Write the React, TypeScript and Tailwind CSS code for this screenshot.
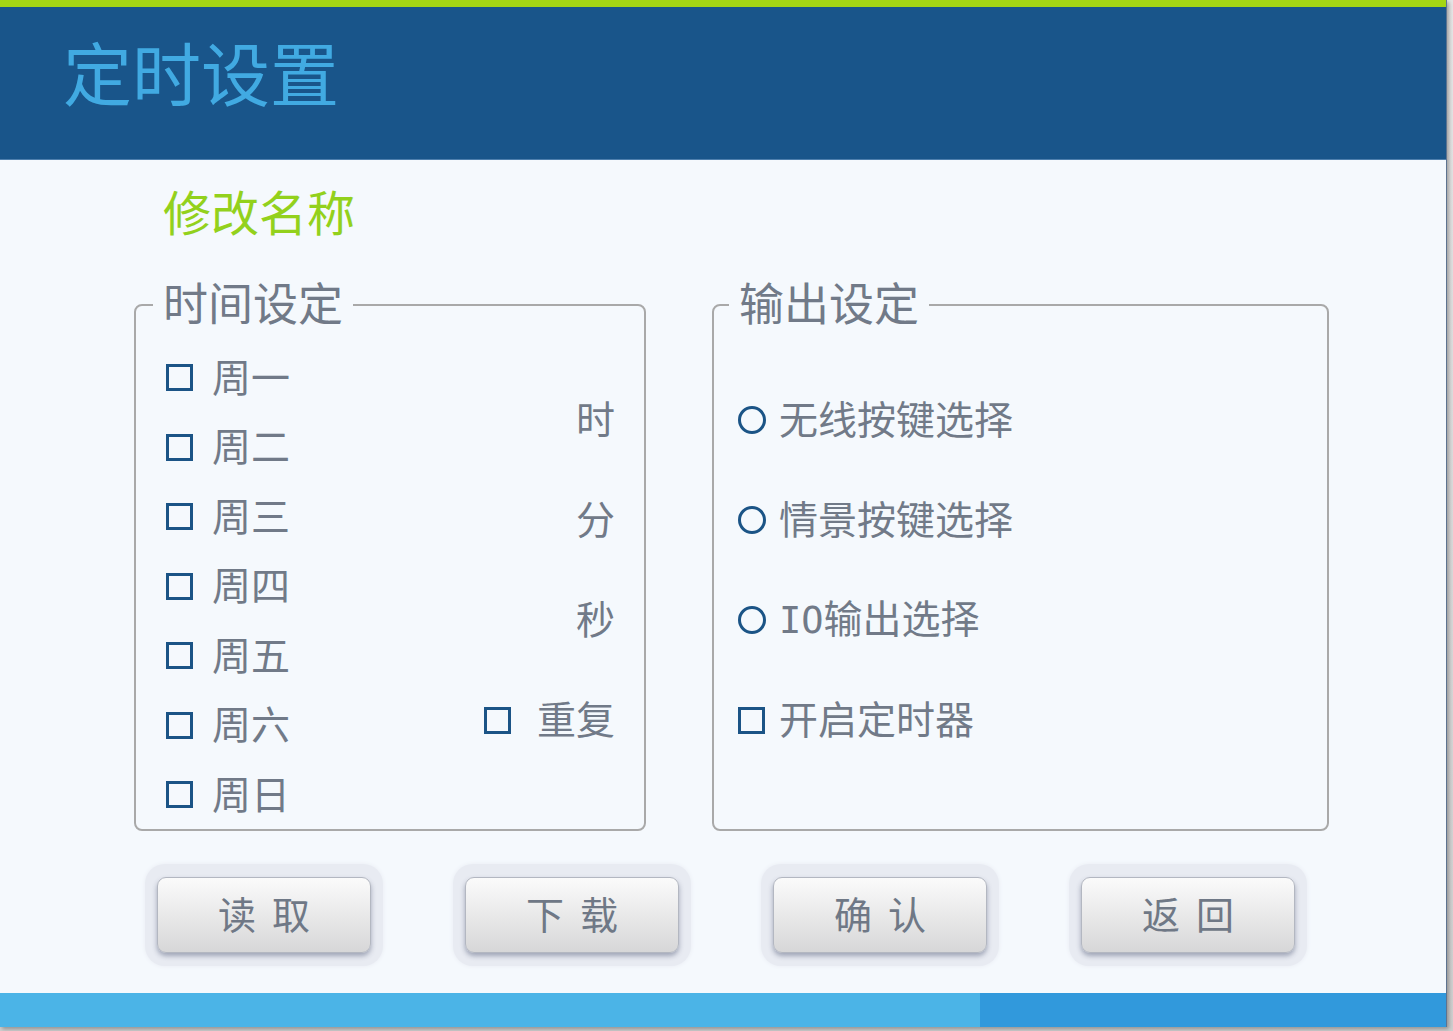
import React from "react";

const FONT = { fontFamily: '"Noto Sans CJK SC", "Noto Sans", sans-serif' };

function CheckBox() {
  return <span className="block w-[27px] h-[27px] border-[3px] border-[#1b5486] shrink-0" />;
}

function Radio() {
  return <span className="block w-[28px] h-[28px] rounded-full border-[3px] border-[#1b5486] shrink-0" />;
}

const days = ["周一", "周二", "周三", "周四", "周五", "周六", "周日"];

function PanelButton({ chars }: { chars: [string, string] }) {
  return (
    <div className="w-[238px] h-[102px] rounded-[20px] bg-[#e8ebf2] shadow-[0_0_4px_#e8ebf2] p-[12px] pt-[13px]">
      <button className="w-[214px] h-[76px] rounded-[9px] border border-[#b3b7c1] bg-gradient-to-b from-[#fbfbfb] to-[#d7d7d8] shadow-[0_3px_5px_rgba(70,80,110,0.45)] flex items-center justify-center gap-[16px] pb-[5px] text-[38px] leading-none text-[#6f7886]">
        <span>{chars[0]}</span>
        <span>{chars[1]}</span>
      </button>
    </div>
  );
}

export default function App() {
  return (
    <div className="w-[1453px] h-[1031px] bg-gradient-to-b from-[#e6e6e6] to-[#cfcfcf] overflow-hidden" style={FONT}>
      <div className="w-[1447px] h-[1027px] bg-[#f5f9fd] border-r border-[#5d7390] shadow-[2px_2px_4px_rgba(0,0,0,0.3)] flex flex-col">
        {/* header */}
        <div className="h-[7px] bg-[#a4d614]" />
        <div className="h-[152px] bg-[#19558a] pl-[63px] pt-[30px]">
          <h1 className="text-[69px] leading-none text-[#41aae2]">定时设置</h1>
        </div>
        <div className="h-[1px] bg-[#4e7fad]" />

        <div className="mt-[26px] pl-[163px] text-[48px] leading-none text-[#93d11c] h-[49px]">修改名称</div>

        {/* settings */}
        <div className="mt-[44px] pl-[134px] flex gap-[66px]">
          <fieldset className="w-[512px] h-[552px] border-2 border-[#a9a9a9] rounded-[8px] text-[#717a88]">
            <legend className="ml-[17px] px-[10px] pb-[6px] text-[45px] leading-none">时间设定</legend>
            <div className="flex justify-between pl-[30px] pr-[29px]">
              <div className="flex flex-col pt-[13px]">
                {days.map((d) => (
                  <div key={d} className="h-[69.5px] flex items-center gap-[19px] text-[39px] leading-none">
                    <CheckBox />
                    <span className="pb-[5px]">{d}</span>
                  </div>
                ))}
              </div>
              <div className="flex flex-col items-end pt-[40px] text-[39px] leading-none">
                <div className="h-[100px] flex items-center pb-[5px]">时</div>
                <div className="h-[100px] flex items-center pb-[5px]">分</div>
                <div className="h-[100px] flex items-center pb-[5px]">秒</div>
                <div className="h-[100px] flex items-center gap-[26px]">
                  <CheckBox />
                  <span className="pb-[5px]">重复</span>
                </div>
              </div>
            </div>
          </fieldset>

          <fieldset className="w-[617px] h-[552px] border-2 border-[#a9a9a9] rounded-[8px] text-[#717a88]">
            <legend className="ml-[15px] px-[10px] pb-[6px] text-[45px] leading-none">输出设定</legend>
            <div className="flex flex-col pl-[24px] pt-[40px] text-[39px] leading-none">
              <div className="h-[100px] flex items-center gap-[13px]">
                <Radio />
                <span className="pb-[5px]">无线按键选择</span>
              </div>
              <div className="h-[100px] flex items-center gap-[13px]">
                <Radio />
                <span className="pb-[5px]">情景按键选择</span>
              </div>
              <div className="h-[100px] flex items-center gap-[13px]">
                <Radio />
                <span className="pb-[5px]">
                  <span style={{ fontFamily: '"DejaVu Sans Mono", monospace' }} className="text-[37px]">IO</span>输出选择
                </span>
              </div>
              <div className="h-[100px] flex items-center gap-[14px]">
                <CheckBox />
                <span className="pb-[5px]">开启定时器</span>
              </div>
            </div>
          </fieldset>
        </div>

        {/* buttons */}
        <div className="mt-[33px] pl-[145px] flex gap-[70px]">
          <PanelButton chars={["读", "取"]} />
          <PanelButton chars={["下", "载"]} />
          <PanelButton chars={["确", "认"]} />
          <PanelButton chars={["返", "回"]} />
        </div>

        {/* footer bar */}
        <div className="mt-[27px] h-[34px] flex">
          <div className="w-[980px] bg-[#4bb4e7]" />
          <div className="flex-1 bg-[#3199dc]" />
        </div>
      </div>
    </div>
  );
}
